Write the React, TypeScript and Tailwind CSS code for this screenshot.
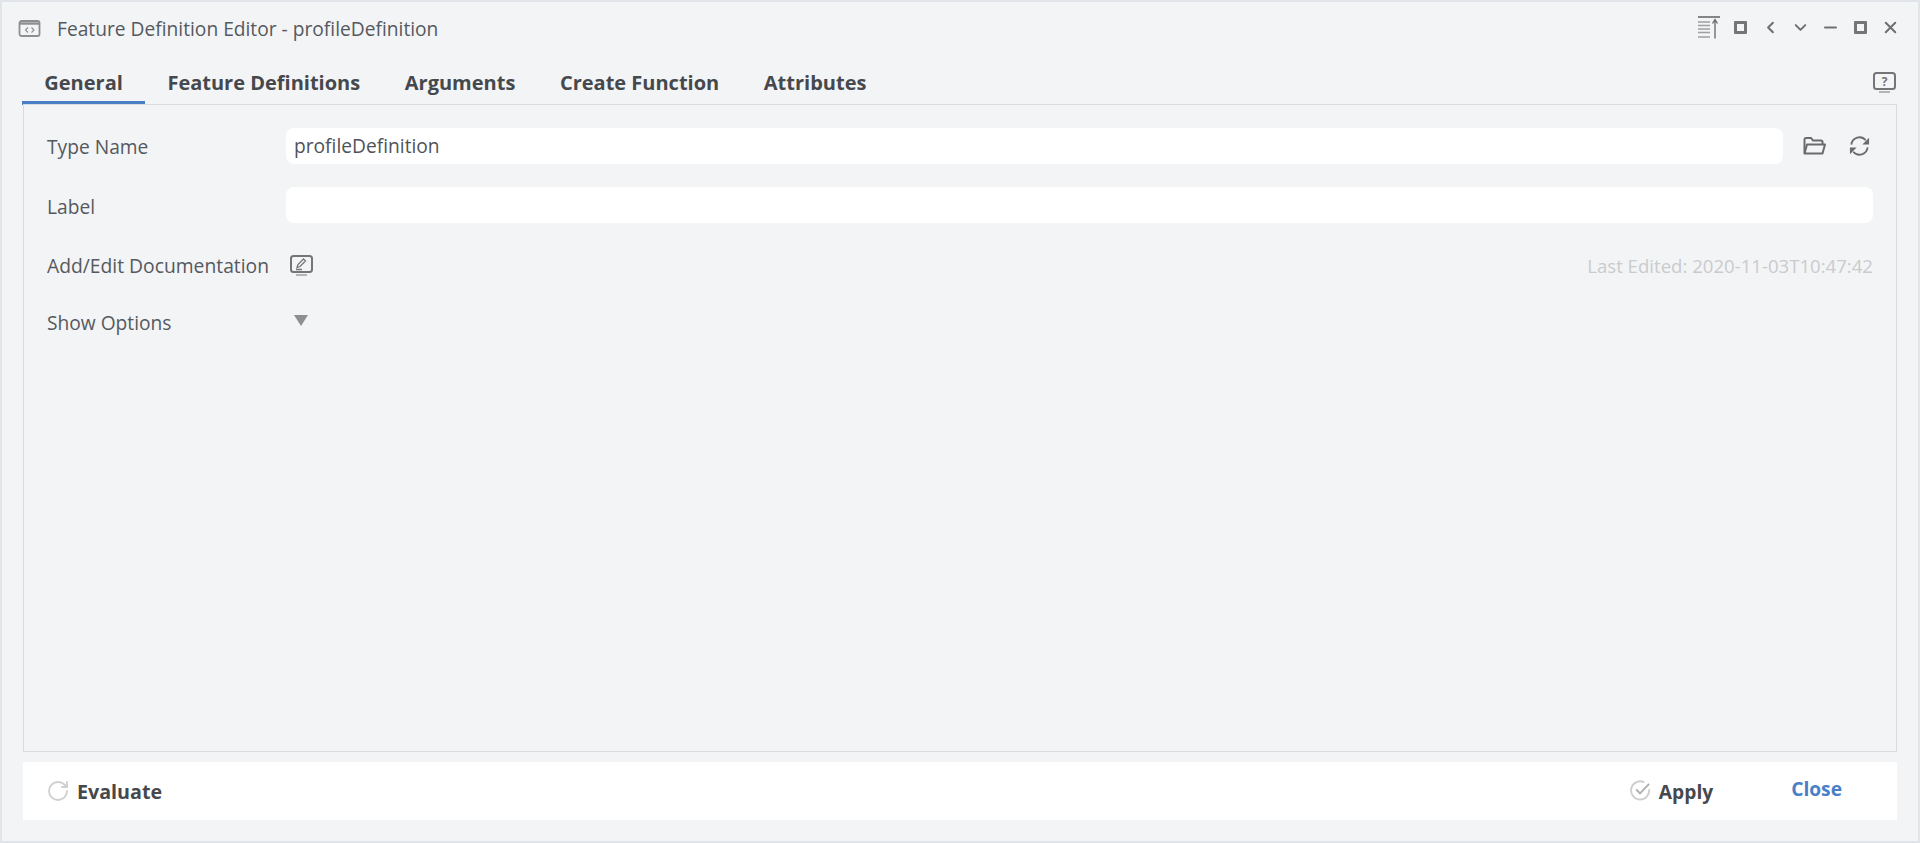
import { ChevronLeft, ChevronDown, Minus, X, RotateCw } from 'lucide-react'

const font = { fontFamily: '"Open Sans", sans-serif' }

const tabs = ['General', 'Feature Definitions', 'Arguments', 'Create Function', 'Attributes']

function WindowIcon() {
  return (
    <svg width="24" height="20" viewBox="0 0 24 20" fill="none" stroke="#8f8f8f" strokeWidth="1.800">
      <rect x="1.500" y="2" width="20" height="15" rx="2" />
      <path d="M2 4.500h20" strokeWidth="2.400" />
      <path d="M10 8.500 7.500 11l2.500 2.500M13.500 8.500l2.500 2.500-2.500 2.500" strokeWidth="1.100" />
    </svg>
  )
}

function CollapseIcon() {
  return (
    <svg width="22" height="23" viewBox="0 0 22 23" fill="none" stroke="#858585">
      <path d="M0 1h22" strokeWidth="2" />
      <path d="M0 6h12M0 9.500h12M0 13h12M0 16.500h12M0 21h12" strokeWidth="1.500" stroke="#a0a0a0" />
      <path d="M17 22.500V3.500M14.500 7.500 17 3.500l2.500 4" strokeWidth="1.400" stroke="#6f6f6f" />
    </svg>
  )
}

function MonitorIcon({ kind }: { kind: 'help' | 'edit' }) {
  return (
    <svg width="23" height="21" viewBox="0 0 23 21" fill="none" stroke="#757575" strokeWidth="2">
      <rect x="1" y="1" width="21" height="16" rx="2.500" />
      <path d="M6 20h11" stroke="#b5b5b5" />
      {kind === 'help' ? (
        <text x="11.500" y="14" textAnchor="middle" fontSize="12" fontWeight="700" fill="#757575" stroke="none" style={font}>
          ?
        </text>
      ) : (
        <path d="m7 12.500 1-3 5.500-5.500 2 2-5.500 5.500zM6 14.500h6" strokeWidth="1.300" />
      )}
    </svg>
  )
}

function FolderIcon() {
  return (
    <svg width="23" height="18" viewBox="0 0 23 18" fill="none" stroke="#6b6b6b" strokeWidth="2">
      <path d="M1.500 16V2.500a1.500 1.500 0 0 1 1.500-1.500h5L10 3.500h8a1.500 1.500 0 0 1 1.500 1.500v2" />
      <path d="M1.500 16.500 4 7.500h18l-2.500 9z" strokeLinejoin="round" />
    </svg>
  )
}

function SyncIcon() {
  return (
    <svg width="23" height="22" viewBox="0 0 24 23" fill="none" stroke="#6b6b6b" strokeWidth="1.900">
      <path d="M3.500 10a8.500 8.500 0 0 1 15-4.500" />
      <path d="M20.500 13a8.500 8.500 0 0 1-15 4.500" />
      <path d="M22 3v7h-7z M2 20v-7h7z" fill="#6b6b6b" stroke="none" />
    </svg>
  )
}

function CheckCircleIcon() {
  return (
    <svg width="21" height="21" viewBox="0 0 22 22" fill="none" stroke="#cfcfcf" strokeWidth="2">
      <path d="M20 9.500A9.500 9.500 0 1 1 15 2.500" />
      <path d="m6.500 10 4 4L20 4" stroke="#b0b0b0" />
    </svg>
  )
}

export default function App() {
  return (
    <div style={font} className="h-[843px] w-[1920px] flex flex-col overflow-hidden border-2 border-[#e1e5e9] bg-[#f3f4f6] text-[#4a4a4a]">
      {/* title bar */}
      <div className="h-[56px] shrink-0 flex items-center pl-[16px] pr-[13px] pb-[2px]">
        <WindowIcon />
        <span className="ml-[15px] text-[19.2px] text-[#55595e]">Feature Definition Editor - profileDefinition</span>
        <div className="ml-auto -mt-[4px] flex items-center text-[#707070]">
          <div className="mr-[5px]">
            <CollapseIcon />
          </div>
          <div className="w-[30px] flex justify-center">
            <div className="h-[13px] w-[13px] border-[3px] border-[#757575] rounded-[1px]" />
          </div>
          <div className="w-[30px] flex justify-center">
            <ChevronLeft size={19} strokeWidth={2.600} />
          </div>
          <div className="w-[30px] flex justify-center">
            <ChevronDown size={19} strokeWidth={2.600} />
          </div>
          <div className="w-[30px] flex justify-center">
            <Minus size={19} strokeWidth={2.400} />
          </div>
          <div className="w-[30px] flex justify-center">
            <div className="h-[13px] w-[13px] border-[3px] border-[#757575] rounded-[1px]" />
          </div>
          <div className="w-[30px] flex justify-center">
            <X size={19} strokeWidth={2.600} />
          </div>
        </div>
      </div>

      {/* tabs */}
      <div className="h-[47px] shrink-0 flex items-end pl-[20px] pr-[22px]">
        {tabs.map((tab, i) => (
          <div
            key={tab}
            className={`h-[47px] flex items-center px-[22.300px] pt-[7px] border-b-[4px] text-[20px] font-bold text-[#45494d] ${
              i === 0 ? 'border-[#4a7fc7]' : 'border-transparent'
            }`}
          >
            {tab}
          </div>
        ))}
        <div className="ml-auto mb-[12px]">
          <MonitorIcon kind="help" />
        </div>
      </div>

      {/* panel */}
      <div className="mx-[21px] -mt-[1px] flex-1 min-h-0 border border-[#d9dcdf] pl-[23px] pr-[23px] pt-[23px]">
        <div className="flex items-center h-[36px]">
          <span className="w-[239px] shrink-0 pt-[3px] text-[19.2px] text-[#55595e]">Type Name</span>
          <div className="flex-1 h-[36px] rounded-[8px] bg-white flex items-center pl-[8px] text-[19.2px] text-[#4f5358]">profileDefinition</div>
          <div className="w-[90px] shrink-0 flex items-center justify-end gap-[22px] pr-[2px]">
            <FolderIcon />
            <SyncIcon />
          </div>
        </div>
        <div className="flex items-center h-[36px] mt-[23px]">
          <span className="w-[239px] shrink-0 pt-[4px] text-[19.2px] text-[#55595e]">Label</span>
          <div className="flex-1 h-[36px] rounded-[8px] bg-white" />
        </div>
        <div className="flex items-center h-[24px] mt-[31px]">
          <span className="w-[239px] shrink-0 text-[19.3px] text-[#55595e] whitespace-nowrap">Add/Edit Documentation</span>
          <div className="ml-[4px] -mt-[2px]">
            <MonitorIcon kind="edit" />
          </div>
          <span className="ml-auto text-[18.600px] text-[#c9cbcd]">Last Edited: 2020-11-03T10:47:42</span>
        </div>
        <div className="flex items-center h-[24px] mt-[33px]">
          <span className="w-[239px] shrink-0 text-[19.2px] text-[#55595e]">Show Options</span>
          <svg width="14" height="11" viewBox="0 0 14 11" className="ml-[8px] -mt-[5px]">
            <path d="M0 0h14L7 11z" fill="#8f8f8f" />
          </svg>
        </div>
      </div>

      {/* footer */}
      <div className="mx-[21px] mt-[10px] mb-[21px] h-[58px] shrink-0 bg-white flex items-center pl-[23px] pr-[55px]">
        <RotateCw size={24} strokeWidth={1.800} color="#cfcfcf" />
        <span className="ml-[7px] pt-[2px] text-[19.700px] font-bold text-[#45494d]">Evaluate</span>
        <div className="ml-auto flex items-center">
          <CheckCircleIcon />
          <span className="ml-[8px] mr-[78px] pt-[2px] text-[19.200px] font-bold text-[#45494d]">Apply</span>
          <span className="-mt-[4px] text-[19.200px] font-bold text-[#4a7fc7]">Close</span>
        </div>
      </div>
    </div>
  )
}
